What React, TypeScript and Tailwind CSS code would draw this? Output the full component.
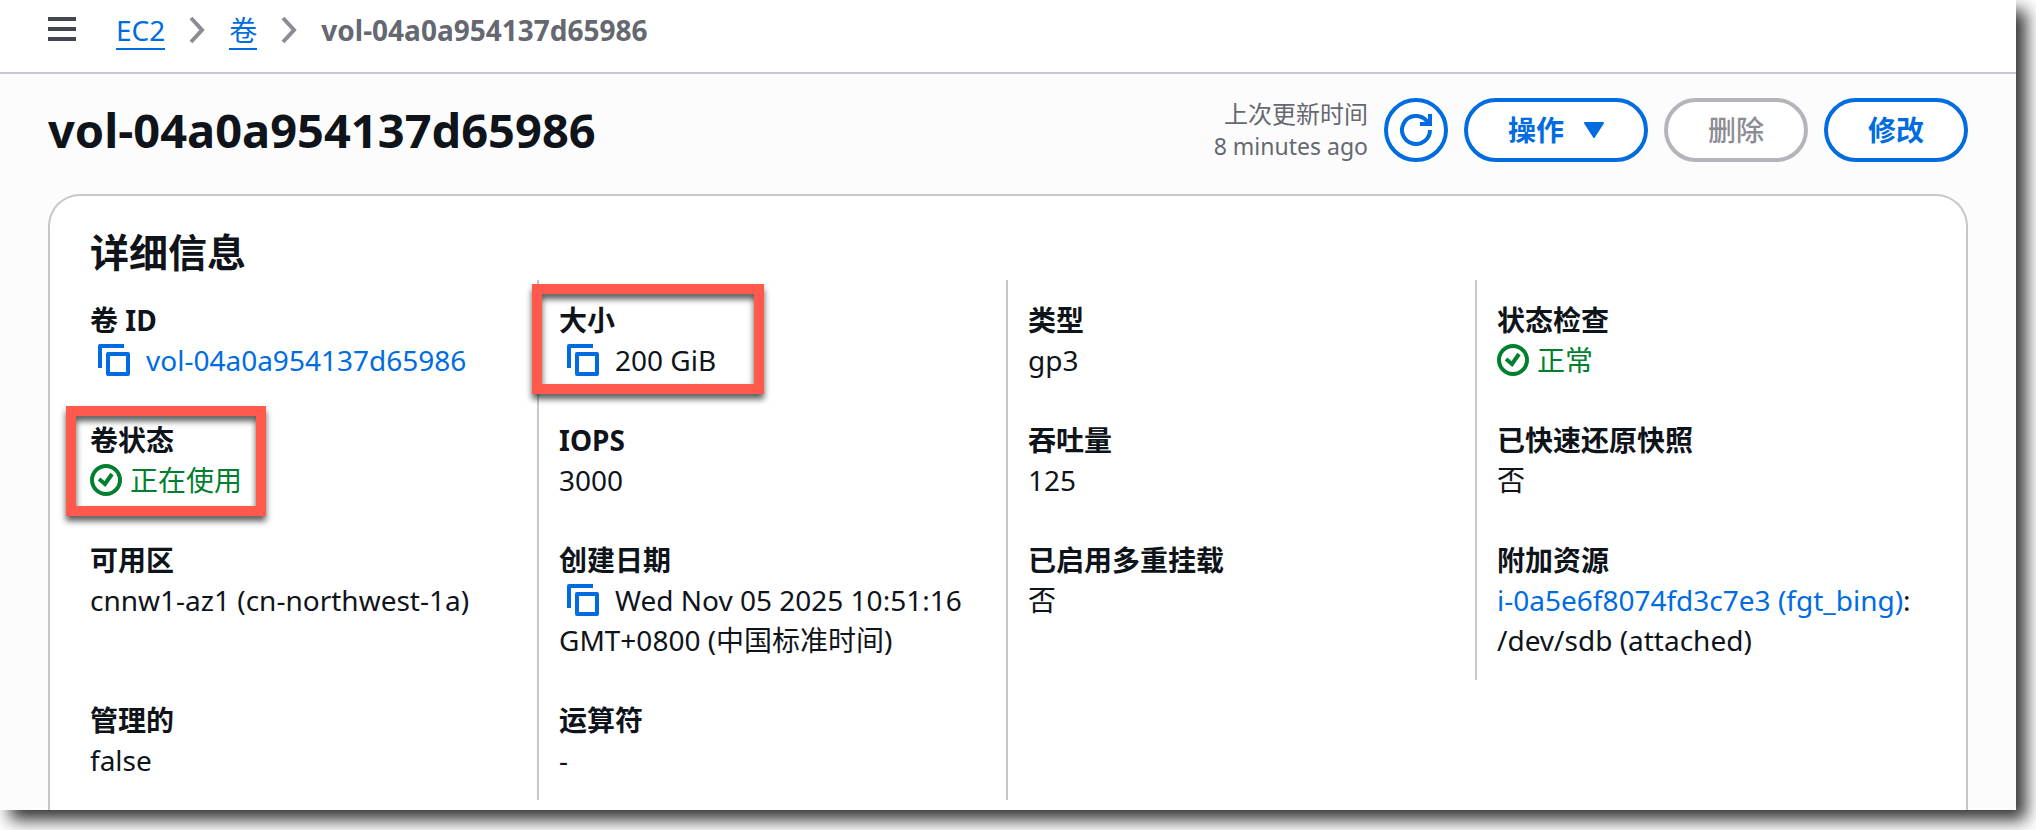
import React from 'react';

interface DetailField {
    label: string;
    value: React.ReactNode;
    highlight?: string;
}

const CopyButton: React.FC<{ label: string }> = ({ label }) => (
    <button type="button" aria-label={label} className="mt-1 mr-4 ml-2 inline-block h-8 w-8 align-top text-[#006ce0]">
        <svg viewBox="0 0 32 32" className="block h-8 w-8" fill="none" stroke="currentColor" strokeWidth="4" strokeLinejoin="round">
            <path d="M2 24V2h24" />
            <path d="M10 10h20v20H10z" />
        </svg>
    </button>
);

const Status: React.FC<{ children: React.ReactNode }> = ({ children }) => (
    <span className="flex items-center gap-2 text-[#00802f]">
        <svg viewBox="0 0 32 32" className="h-8 w-8" fill="none" stroke="currentColor" strokeWidth="4">
            <circle cx="16" cy="16" r="14" />
            <path d="M9 15l6 5 7-10" />
        </svg>
        {children}
    </span>
);

const Chevron: React.FC = () => (
    <svg viewBox="0 0 16 28" className="h-7 w-4" fill="none" stroke="#8c8c94" strokeWidth="4" aria-hidden="true">
        <path d="M2 2l11 12L2 26" />
    </svg>
);

// 按行排列，每行四列；null 表示空单元格
const FIELDS: (DetailField | null)[] = [
    {
        label: '卷 ID',
        value: (
            <>
                <CopyButton label="复制卷 ID" />
                <a href="#volume" className="text-[#006ce0]">vol-04a0a954137d65986</a>
            </>
        )
    },
    {
        label: '大小',
        value: (
            <>
                <CopyButton label="复制大小" />
                200 GiB
            </>
        ),
        highlight: '-left-[7px] top-1 w-[232px]'
    },
    { label: '类型', value: 'gp3' },
    { label: '状态检查', value: <Status>正常</Status> },
    {
        label: '卷状态',
        value: <Status>正在使用</Status>,
        highlight: '-left-1 top-1.5 w-[200px]'
    },
    { label: 'IOPS', value: '3000' },
    { label: '吞吐量', value: '125' },
    { label: '已快速还原快照', value: '否' },
    { label: '可用区', value: 'cnnw1-az1 (cn-northwest-1a)' },
    {
        label: '创建日期',
        value: (
            <>
                <CopyButton label="复制创建日期" />
                Wed Nov 05 2025 10:51:16 GMT+0800 (中国标准时间)
            </>
        )
    },
    { label: '已启用多重挂载', value: '否' },
    {
        label: '附加资源',
        value: (
            <>
                <a href="#instance" className="text-[#006ce0]">i-0a5e6f8074fd3c7e3 (fgt_bing)</a>:
                <span className="block">/dev/sdb (attached)</span>
            </>
        )
    },
    { label: '管理的', value: 'false' },
    { label: '运算符', value: '-' },
    null
];

const Breadcrumbs: React.FC = () => (
    <header className="flex h-[74px] items-start border-b-2 border-[#c6c6cd] bg-white pl-12 pt-2.5">
        <button type="button" aria-label="打开导航" className="mr-10 mt-[7px] flex w-7 flex-col gap-1.5">
            <span className="h-1 w-full bg-[#424650]" />
            <span className="h-1 w-full bg-[#424650]" />
            <span className="h-1 w-full bg-[#424650]" />
        </button>
        <nav aria-label="面包屑" className="flex items-center leading-10">
            <a href="#ec2" className="h-10 border-b-2 border-[#006ce0] text-[#006ce0]">EC2</a>
            <span className="mx-6"><Chevron /></span>
            <a href="#volumes" className="h-10 border-b-2 border-[#006ce0] text-[#006ce0]">卷</a>
            <span className="mx-6"><Chevron /></span>
            <span className="font-bold text-[#656871]">vol-04a0a954137d65986</span>
        </nav>
    </header>
);

const PageHeader: React.FC = () => (
    <div className="flex items-center justify-between pt-6">
        <h1 className="text-[47px] leading-[64px] font-bold">vol-04a0a954137d65986</h1>
        <div className="flex items-center gap-4">
            <p className="text-right text-2xl leading-8 text-[#656871]">
                上次更新时间
                <span className="block text-[23px]">8 minutes ago</span>
            </p>
            <button
                type="button"
                aria-label="刷新"
                className="flex h-16 w-16 items-center justify-center rounded-full border-4 border-[#006ce0] bg-white text-[#006ce0]"
            >
                <svg viewBox="0 0 32 32" className="h-8 w-8" fill="none" stroke="currentColor" strokeWidth="4">
                    <path d="M30 16a14 14 0 1 1-4-9.800L30 10" />
                    <path d="M30 0v10H20" />
                </svg>
            </button>
            <button
                type="button"
                className="flex h-16 items-center gap-5 rounded-full border-4 border-[#006ce0] bg-white px-10 font-bold text-[#006ce0]"
            >
                操作
                <svg viewBox="0 0 20 16" className="h-4 w-5" fill="currentColor" stroke="currentColor" strokeWidth="2" strokeLinejoin="round" aria-hidden="true">
                    <path d="M1 1h18l-9 14z" />
                </svg>
            </button>
            <button
                type="button"
                disabled
                className="h-16 rounded-full border-4 border-[#b4b4bb] bg-white px-10 font-medium text-[#8c8c94]"
            >
                删除
            </button>
            <button type="button" className="h-16 rounded-full border-4 border-[#006ce0] bg-white px-10 font-bold text-[#006ce0]">
                修改
            </button>
        </div>
    </div>
);

const App: React.FC = () => {
    return (
        <div className="bg-white pr-5 pb-5 font-['Noto_Sans','Noto_Sans_CJK_SC',sans-serif] text-[28px] leading-10 text-[#0f141a]">
            <div className="bg-[#fcfcfd] shadow-[10px_10px_16px_rgba(0,0,0,0.8)]">
                <Breadcrumbs />
                <main className="px-12">
                    <PageHeader />
                    <section className="mt-8 rounded-t-[32px] border-2 border-b-0 border-[#c6c6cd] bg-white pt-8 pr-[22px] pb-2.5 pl-[18px]">
                        <h2 className="pb-1 pl-[22px] text-[39px] leading-12 font-bold">详细信息</h2>
                        <dl className="grid grid-cols-4">
                            {FIELDS.map((field, index) => (
                                <div
                                    key={field ? field.label : index}
                                    className={`relative border-l-2 py-5 pl-5 ${
                                        index % 4 === 0 ? 'border-transparent' : 'border-[#c6c6cd]'
                                    }`}
                                >
                                    {field && (
                                        <>
                                            <dt className="font-bold">{field.label}</dt>
                                            <dd>{field.value}</dd>
                                        </>
                                    )}
                                    {/* 红色标注框 */}
                                    {field?.highlight && (
                                        <div
                                            className={`pointer-events-none absolute z-10 h-[110px] border-10 border-[#ff5a4c] drop-shadow-[0_5px_3px_rgba(0,0,0,0.65)] ${field.highlight}`}
                                        />
                                    )}
                                </div>
                            ))}
                        </dl>
                    </section>
                </main>
            </div>
        </div>
    );
};

export default App;
